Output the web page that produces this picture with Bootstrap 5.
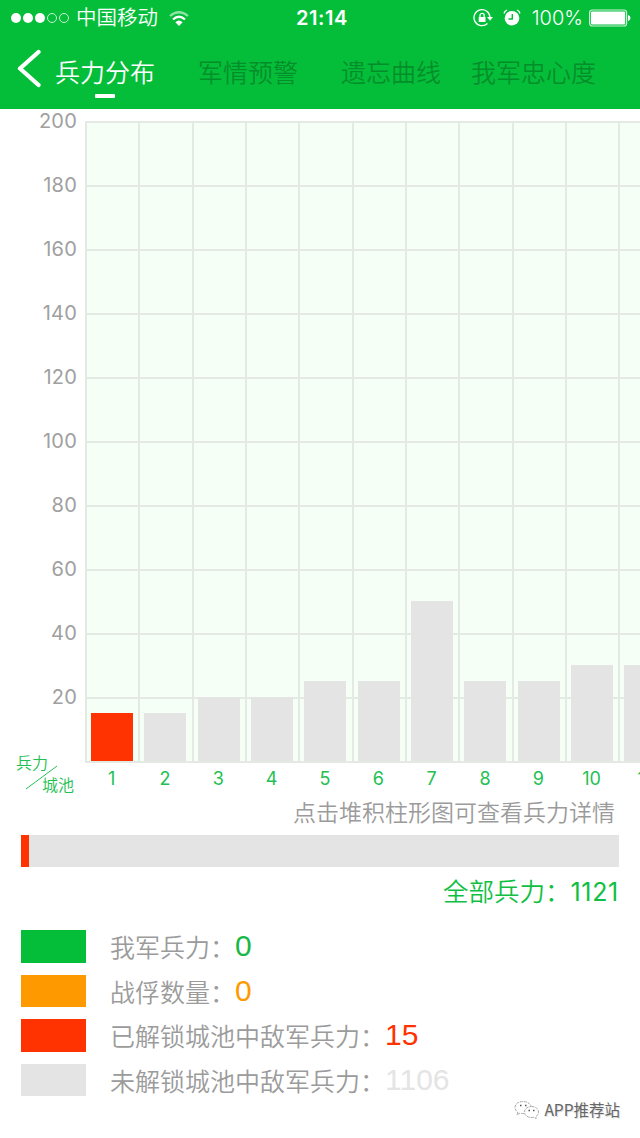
<!DOCTYPE html>
<html lang="zh-CN">
<head>
<meta charset="utf-8">
<meta name="viewport" content="width=device-width, initial-scale=1">
<title>兵力分布</title>
<link rel="stylesheet" href="https://cdn.jsdelivr.net/npm/bootstrap@5.3.0/dist/css/bootstrap.min.css">
<style>
:root{--army:#04be3a;--enemy:#ff3202;--pow:#ff9900;--locked:#e4e4e4;--muted:#9b9b9b}
body{font-family:Inter,"Noto Sans CJK SC",sans-serif;font-weight:350;line-height:1;background:#fff}
.screen{width:640px;height:1138px}
.app-head{background:var(--army);height:109px;color:#fff}
.status{height:36px;font-size:20px;padding-left:11px;padding-right:9px}
.signal{gap:2px}
.signal i{width:10px;height:10px;border-radius:50%;background:#fff}
.signal i.off{background:none;border:1px solid #c9f2d5}
.status svg,.tabs svg{display:block;flex:none}
.carrier{margin-left:7px;font-size:20.5px;padding-top:1px}
.clock{left:0;right:0;top:0;height:36px;font-weight:600;font-size:20px;letter-spacing:.6px}
.tabs{height:73px;font-size:25px;padding-left:17px}
.tab-item{color:#048e2a;height:73px;padding-top:24px;white-space:nowrap;line-height:26px}
.tab-item.on{color:#fff}
.tab-item.on::after{content:"";display:block;width:20px;height:4px;background:#fff;margin:8px auto 0;border-radius:1px}
.y-axis{width:85px;height:652px;padding-right:8px;font-size:20px;font-weight:400;color:#a0a0a0;letter-spacing:.2px}
.y-axis div{height:64px;line-height:24px;text-align:right}
.chart{height:684px}
.plot{width:555px;padding-top:12px}
.area{height:642px;background:repeating-linear-gradient(#e4e9e4 0 2px,transparent 2px 64px) #f5fff5}
.slot{width:53.333px;flex:none;border-left:2px solid #e4e9e4;padding:0 0 2px 4px}
.stack{background:var(--locked);width:42px}
.stack.open{background:var(--enemy)}
.x-axis{font-size:18px;font-weight:400;color:#22c052}
.x-axis div{width:53.333px;flex:none;text-align:center;height:32px;line-height:32px}
.corner{width:85px;height:32px;font-size:16px;color:#22c052;padding:3px 0 0 16px;margin-top:-9px}
.corner svg{left:25px;top:11px}
.hint{height:42px;font-size:23px;color:var(--muted);padding:7px 25px 0 0;line-height:26px}
.total-bar{height:32px;margin:0 21px;background:var(--locked);width:598px}
.total{color:#10bf42;font-size:25.5px;height:63px;padding:12px 21px 0 0;line-height:26px}
.total span{font-weight:400;font-size:25px;letter-spacing:.7px}
.legend-row{height:44.6px;font-size:25px;color:var(--muted)}
.swatch{width:65px;height:32.5px;margin-left:21px;margin-right:24px;flex:none}
.label-text{line-height:33px;padding-top:2px;white-space:nowrap}
.amount{font-family:"Liberation Sans",sans-serif;font-weight:400;font-size:30px;line-height:32px}
.brand{right:20px;top:1098px;height:24px;font-size:16px;font-weight:400;color:#666;text-shadow:1px 1px 0 #ddd}
</style>
</head>
<body>
<div class="screen position-relative overflow-hidden">
<header class="app-head">
  <div class="status d-flex align-items-center position-relative">
    <div class="signal d-flex"><i></i><i></i><i></i><i class="off"></i><i class="off"></i></div>
    <span class="carrier">中国移动</span>
    <svg style="margin-left:11px" width="20" height="15" viewBox="0 0 20 15" fill="none" stroke="#fff" stroke-width="2.2"><path d="M1 5Q10-2.5 19 5" stroke="#8fe3a8"/><path d="M4 8.5Q10 3 16 8.5"/><path d="M10 15L6.4 11.2Q10 8 13.600 11.200Z" fill="#fff" stroke="none"/></svg>
    <div class="clock position-absolute d-flex align-items-center justify-content-center ps-1">21:14</div>
    <svg class="ms-auto" width="20" height="18" viewBox="0 0 20 18" fill="none" stroke="#fff" stroke-width="1.300"><path d="M17 8.500A8 8 0 1 0 14.500 14.500"/><path d="M14 8h6l-3 3.800z" fill="#fff" stroke="none"/><path d="M5.700 8h6.800v5H5.700z" fill="#fff" stroke="none"/><path d="M7 8V6.500a2.100 2.100 0 0 1 4.200 0V8"/></svg>
    <svg style="margin-left:10px" width="18" height="18" viewBox="0 0 18 18" fill="none"><circle cx="9" cy="9.200" r="7.300" fill="#fff"/><path d="M1 4.500Q1.500 2 4 1M17 4.500Q16.500 2 14 1" stroke="#fff" stroke-width="1.300"/><path d="M9.300 5v5H5.500" stroke="#04be3a" stroke-width="1.400"/></svg>
    <span style="margin-left:11px">100%</span>
    <svg style="margin-left:6px" width="42" height="18" viewBox="0 0 42 18"><rect x=".6" y="1" width="37" height="16" rx="2.500" fill="none" stroke="#c9f2d5" stroke-width="1.200"/><rect x="2" y="2.500" width="34.200" height="13" rx="1" fill="#fff"/><path d="M39 6q2.500.5 2.500 3T39 12z" fill="#fff"/></svg>
  </div>
  <nav class="tabs d-flex">
    <svg width="24" height="40" style="margin-top:12px" viewBox="0 0 24 40" fill="none" stroke="#fff" stroke-width="4.300" stroke-linecap="round" stroke-linejoin="round"><path d="M21.500 4L3 20.500 21.500 37"/></svg>
    <div class="tab-item on" style="margin-left:14px">兵力分布</div>
    <div class="tab-item" style="margin-left:43px">军情预警</div>
    <div class="tab-item" style="margin-left:43px">遗忘曲线</div>
    <div class="tab-item" style="margin-left:30px">我军忠心度</div>
  </nav>
</header>
<main>
  <section class="chart d-flex">
    <div>
      <div class="y-axis"><div>200</div><div>180</div><div>160</div><div>140</div><div>120</div><div>100</div><div>80</div><div>60</div><div>40</div><div>20</div></div>
      <div class="corner position-relative">兵力<div style="padding:6px 0 0 26px">城池</div><svg class="position-absolute" width="34" height="28" viewBox="0 0 34 28"><path d="M1 26L32 3" stroke="#22c052" stroke-width="1"/></svg></div>
    </div>
    <div class="plot overflow-hidden">
      <div class="area d-flex align-items-end" id="area"></div>
      <div class="x-axis d-flex" id="xaxis"></div>
    </div>
  </section>
  <div class="hint text-end">点击堆积柱形图可查看兵力详情</div>
  <div class="total-bar"><div class="stack open h-100" style="width:8px"></div></div>
  <div class="total text-end">全部兵力：<span>1121</span></div>
  <section>
    <div class="legend-row d-flex"><div class="swatch" style="background:var(--army)"></div><span class="label-text">我军兵力：</span><span class="amount" style="color:#18b848">0</span></div>
    <div class="legend-row d-flex"><div class="swatch" style="background:var(--pow)"></div><span class="label-text">战俘数量：</span><span class="amount" style="color:var(--pow)">0</span></div>
    <div class="legend-row d-flex"><div class="swatch" style="background:var(--enemy)"></div><span class="label-text">已解锁城池中敌军兵力：</span><span class="amount" style="color:var(--enemy)">15</span></div>
    <div class="legend-row d-flex"><div class="swatch" style="background:var(--locked)"></div><span class="label-text">未解锁城池中敌军兵力：</span><span class="amount" style="color:var(--locked)">1106</span></div>
  </section>
</main>
<div class="brand position-absolute d-flex align-items-center">
  <svg width="26" height="20" viewBox="0 0 26 20" fill="none" stroke="#aaa" stroke-width="1" stroke-dasharray="3 1"><path d="M10 13.500q-2 .3-4-.5L3 15l.7-3Q1 10 1 7.500C1 4 4.500 1.500 9 1.500S16.500 4 17 6.500"/><path d="M17.500 6.500c4.200 0 7 2.500 7 5.500 0 2-1 3.500-2.700 4.500l.4 2-2.500-1.200c-5 1-9.200-1.500-9.200-5.300 0-3 3-5.500 7-5.500z"/><path d="M6 5.500h1.500M11 5.500h1.500M14.500 10.500H16M19 10.500h1.500" stroke="#555" stroke-width="1.500"/></svg>
  <span style="margin-left:4px;font-family:'Noto Sans CJK SC',sans-serif;font-size:15.5px">APP推荐站</span>
</div>
</div>
<script>
const troops=[15,15,20,20,25,25,50,25,25,30,30];
document.getElementById('area').innerHTML=troops.map((n,i)=>`<div class="slot h-100 d-flex align-items-end"><div class="stack${i?'':' open'}" style="height:${n*3.2}px"></div></div>`).join('');
document.getElementById('xaxis').innerHTML=troops.map((n,i)=>`<div>${i+1}</div>`).join('');
</script>
<script src="https://cdn.jsdelivr.net/npm/bootstrap@5.3.0/dist/js/bootstrap.bundle.min.js"></script>
</body>
</html>
